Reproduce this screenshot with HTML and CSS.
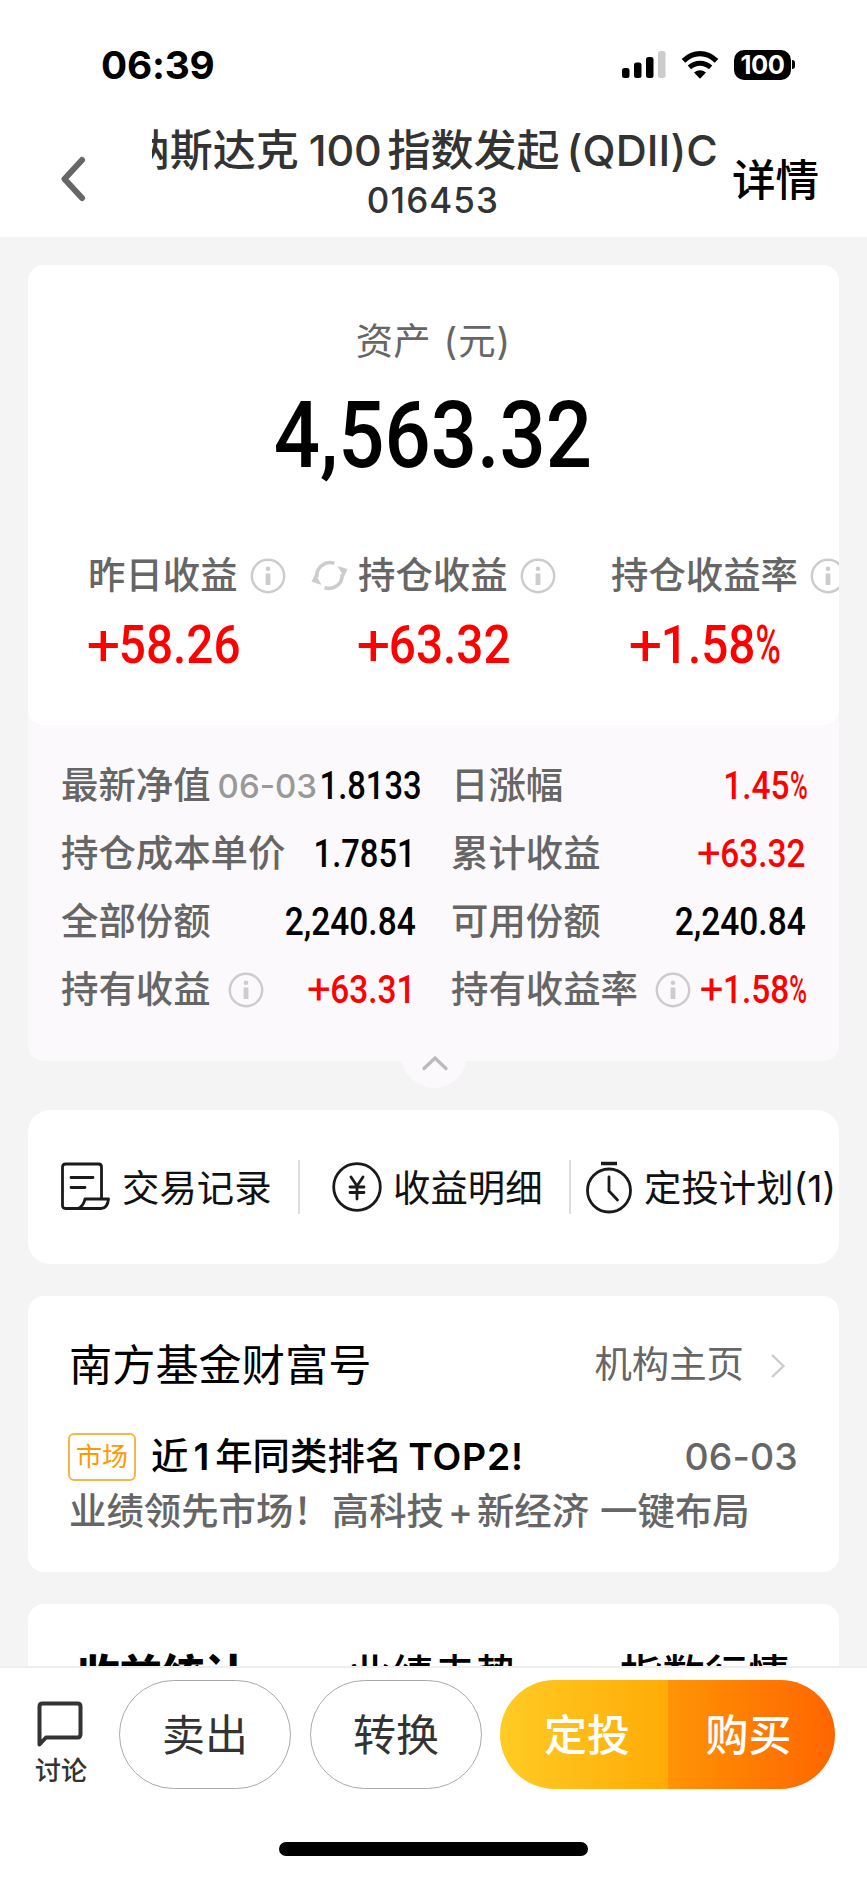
FILE: index.html
```html
<!DOCTYPE html>
<html lang="zh-CN">
<head>
<meta charset="utf-8">
<title>基金持仓</title>
<link rel="stylesheet" href="styles.css">
</head>
<body>
<svg class="defs" width="0" height="0">
  <symbol id="info" viewBox="0 0 36 36">
    <circle cx="18" cy="18" r="16.2" fill="none" stroke="#ccc" stroke-width="2.4"/>
    <circle cx="18" cy="10.8" r="2.3" fill="#ccc"/>
    <path d="M15.600 15.500h4.800v11.500h-4.800z" fill="#ccc"/>
  </symbol>
</svg>
<div class="screen">
  <header class="header">
    <div class="status">
      <span class="time">06:39</span>
      <div class="indicators">
        <svg width="44" height="28" viewBox="0 0 44 28">
          <rect x="0" y="17" width="7.500" height="10" rx="2.5"/>
          <rect x="12" y="11.500" width="7.500" height="15.500" rx="2.500"/>
          <rect x="24" y="6" width="7.500" height="21" rx="2.500"/>
          <rect x="36" y="0" width="7.500" height="27" rx="2.500" fill="#ccc"/>
        </svg>
        <svg class="wifi" width="38" height="28" viewBox="0 0 38 28">
          <path d="M2.500 9.800Q10 2.600 19 2.600T35.500 9.800" fill="none" stroke="#000" stroke-width="5.200"/>
          <path d="M8.400 16.400Q13 12.200 19 12.200T29.600 16.400" fill="none" stroke="#000" stroke-width="5"/>
          <path d="M13 21.600Q19 17 25 21.600L19 27.800Z"/>
        </svg>
        <div class="battery"><span>100</span></div>
        <i class="nub"></i>
      </div>
    </div>
    <div class="nav">
      <svg class="back" width="28" height="48" viewBox="0 0 28 48"><path d="M23 5L5.500 24L23 43" fill="none" stroke="#666" stroke-width="6" stroke-linecap="round" stroke-linejoin="round"/></svg>
      <div class="heading">
        <div class="marquee"><span class="fund">纳斯达克<b class="hund">100</b>指数发起<b class="cls">(QDII)C</b></span></div>
        <div class="code">016453</div>
      </div>
      <span class="detail">详情</span>
    </div>
  </header>

  <main class="content">
    <section class="asset">
      <div class="summary">
        <div class="asset-label">资产<span class="unit">(元)</span></div>
        <div class="total"><span class="num">4,563.32</span></div>
        <div class="stats">
          <div class="stat">
            <div class="stat-label">昨日收益<svg class="info"><use href="#info"/></svg></div>
            <span class="num big"><b class="sign">+</b>58.26</span>
          </div>
          <div class="stat second">
            <div class="stat-label"><svg class="refresh" viewBox="0 0 38 32"><g fill="none" stroke="#ccc" stroke-width="3.600"><path d="M23.500 3.400A13 13 0 0 0 6 17"/><path d="M13.500 27.600A13 13 0 0 0 31 14"/></g><path d="M.500 21.500L10.500 25L4.500 13.500ZM36.500 9L26.500 6L33 17Z" fill="#ccc"/></svg>持仓收益<svg class="info"><use href="#info"/></svg></div>
            <span class="num big"><b class="sign">+</b>63.32</span>
          </div>
          <div class="stat third">
            <div class="stat-label">持仓收益率<svg class="info"><use href="#info"/></svg></div>
            <span class="num big"><b class="sign">+</b>1.58<b class="pct">%</b></span>
          </div>
        </div>
      </div>
      <div class="details">
        <div class="row"><span>最新净值</span><span class="date">06-03</span><span class="val over"><span class="num">1.8133</span></span></div>
        <div class="row"><span>日涨幅</span><span class="val red"><span class="num">1.45<b class="pct">%</b></span></span></div>
        <div class="row"><span>持仓成本单价</span><span class="val unit-price"><span class="num">1.7851</span></span></div>
        <div class="row"><span>累计收益</span><span class="val red"><span class="num"><b class="sign">+</b>63.32</span></span></div>
        <div class="row"><span>全部份额</span><span class="val"><span class="num">2,240.84</span></span></div>
        <div class="row"><span>可用份额</span><span class="val"><span class="num">2,240.84</span></span></div>
        <div class="row"><span>持有收益</span><svg class="info wide"><use href="#info"/></svg><span class="val red"><span class="num"><b class="sign">+</b>63.31</span></span></div>
        <div class="row"><span>持有收益率</span><svg class="info wide"><use href="#info"/></svg><span class="val red"><span class="num"><b class="sign">+</b>1.58<b class="pct">%</b></span></span></div>
      </div>
      <div class="collapse"><svg width="28" height="16" viewBox="0 0 28 16"><path d="M3 13.500L14 3L25 13.500" fill="none" stroke="#bbb" stroke-width="3.400" stroke-linecap="round"/></svg></div>
    </section>

    <section class="actions">
      <div class="action a1">
        <svg width="50" height="52" viewBox="0 0 50 52" fill="none" stroke="#1a1a1a" stroke-width="2.800" stroke-linejoin="round" stroke-linecap="round"><path d="M20 47.500H5.500Q2.500 47.500 2.500 44.500V6Q2.500 3 5.500 3H38.500Q41.500 3 41.500 6V37.500M11 16.500H33M11 26.500H25M25 38H48.500Q47.500 47.500 41 47.500H18Q23.500 45 25 38Z"/></svg>
        <span>交易记录</span>
      </div>
      <div class="action a2">
        <svg width="50" height="52" viewBox="0 0 50 52" fill="none" stroke="#1a1a1a" stroke-width="2.800" stroke-linecap="round"><circle cx="25" cy="26" r="23.300"/><path d="M19 16L25 25L31 16M18 26H32M18 31.500H32M25 25V38"/></svg>
        <span>收益明细</span>
      </div>
      <div class="action a3">
        <svg width="48" height="54" viewBox="0 0 48 54" fill="none" stroke="#1a1a1a" stroke-width="2.800" stroke-linecap="round"><circle cx="24" cy="30.500" r="21.500"/><path d="M24 17V31L32.500 40"/><path d="M16 3.500H32" stroke-width="3.400" stroke-linecap="butt"/></svg>
        <span>定投计划(1)</span>
      </div>
    </section>

    <section class="news">
      <div class="news-head">
        <span class="org">南方基金财富号</span>
        <span class="home">机构主页</span>
        <svg width="18" height="28" viewBox="0 0 18 28"><path d="M3 3L14.500 14L3 25" fill="none" stroke="#ccc" stroke-width="2.400"/></svg>
      </div>
      <div class="post">
        <span class="tag">市场</span>
        <span class="post-title">近<b class="one">1</b>年同类排名<b class="top">TOP2!</b></span>
        <span class="post-date">06-03</span>
      </div>
      <div class="post-sub">业绩领先市场！<span class="hi">高科技</span><b class="plus">+</b>新经济<span class="one-key">一键布局</span></div>
    </section>

    <section class="tabs">
      <span class="tab on">收益统计</span>
      <span class="tab">业绩走势</span>
      <span class="tab">指数行情</span>
    </section>
  </main>

  <footer class="footer">
    <div class="bar">
      <div class="discuss">
        <svg width="48" height="50" viewBox="0 0 48 50"><path d="M3.500 44.500V6.500Q3.500 3.500 6.500 3.500H41.500Q44.500 3.500 44.500 6.500V34Q44.500 37.500 41.500 37.500H10Z" fill="none" stroke="#333" stroke-width="4" stroke-linejoin="round"/></svg>
        <span>讨论</span>
      </div>
      <div class="pill">卖出</div>
      <div class="pill">转换</div>
      <div class="buy"><span class="auto">定投</span><span class="now">购买</span></div>
    </div>
    <div class="indicator"></div>
  </footer>
</div>
</body>
</html>
```

FILE: styles.css
```css
* { box-sizing: border-box; }
body { margin: 0; background: #f4f4f4; }
b { font-weight: inherit; }
svg { display: block; flex: none; }
.defs { position: absolute; }
.screen {
  width: 867px; height: 1877px; overflow: hidden;
  display: flex; flex-direction: column;
  font-family: Inter, "Noto Sans CJK SC", sans-serif;
  font-size: 37.4px; line-height: 48px; color: #000; white-space: nowrap;
}

/* Header */
.header { height: 237px; flex: none; background: #fff; }
.status { height: 120px; padding: 42px 72px 0 101px; display: flex; justify-content: space-between; align-items: flex-start; }
.time { font-size: 38.8px; font-weight: 700; line-height: 46px; letter-spacing: -0.2px; }
.indicators { display: flex; align-items: center; height: 45px; }
.wifi { margin-left: 15px; }
.battery {
  margin-left: 15px; width: 57px; height: 30px; border-radius: 10px; background: #000; color: #fff;
  font-size: 25.5px; font-weight: 700; line-height: 30px; text-align: center; letter-spacing: -0.5px;
}
.nub { width: 3px; height: 9px; margin-left: 1px; border-radius: 0 4px 4px 0; background: #000; }
.nav { display: flex; height: 117px; padding-left: 59px; }
.back { margin-top: 35px; }
.heading { width: 566px; margin-left: 65px; color: #333; }
.marquee { height: 58px; overflow: hidden; display: flex; justify-content: flex-end; padding-top: 2px; }
.fund { font-size: 43px; font-weight: 500; line-height: 56px; }
.hund { margin: 0 6px 0 10px; letter-spacing: -0.2px; }
.cls { margin-left: 7px; letter-spacing: 0.1px; }
.code { margin: -1px 0 0 -4px; font-size: 35px; font-weight: 500; line-height: 46px; letter-spacing: 1.1px; text-align: center; }
.detail { margin: 33px 0 0 14px; font-size: 43.6px; font-weight: 500; line-height: 56px; }

/* Asset card */
.content { flex: 1; min-height: 0; padding: 28px 28px 0; overflow: hidden; }
.asset { position: relative; height: 796px; border-radius: 16px; background: #fbf9fb; }
.summary { height: 460px; overflow: hidden; border-radius: 16px; background: #fff; }
.asset-label { padding-top: 53px; text-align: center; color: #666; }
.unit { margin-left: 13px; letter-spacing: 1px; }
.num { font-family: Roboto, sans-serif; font-weight: 500; display: inline-block; transform: scaleX(0.88); }
.sign { display: inline-block; margin: 0 0.05em 0 0.03em; font-weight: 400; transform: scale(1.25, 1.1); }
.pct { display: inline-block; margin: 0 -0.14em 0 -0.1em; transform: scaleX(0.72); }
.total { margin: 17px 2px 0 0; text-align: center; font-size: 92.5px; line-height: 100px; }
.stats { display: flex; margin-top: 66px; color: #666; font-weight: 500; }
.stat { width: 270px; flex: none; padding-left: 60px; }
.stat-label { display: flex; align-items: center; height: 48px; }
.info { width: 36px; height: 36px; margin-left: 12px; }
.refresh { width: 38px; height: 32px; margin: 0 9px 0 -47px; }
.third { padding-left: 43px; }
.big { margin-top: 17px; font-size: 53px; line-height: 56px; color: #f00; transform: scaleX(0.9); transform-origin: left; }
.third .big { margin-left: 19px; }
.details {
  height: 335px; padding: 27px 33px 0; display: grid; grid-template-columns: 355px 355px;
  column-gap: 35px; grid-auto-rows: 68px; color: #666; font-weight: 500;
}
.row { display: flex; align-items: center; }
.val { display: flex; flex: 1 1 0; min-width: 0; justify-content: flex-end; font-size: 38px; color: #000; }
.val .num { transform-origin: right; }
.val.red { color: #f00; }
.val.over { margin-right: -6px; }
.val.over .num, .val.unit-price .num { transform: scaleX(0.86); }
.date { margin-left: 7px; font-size: 33px; letter-spacing: 0; color: #999; }
.info.wide { margin-left: 17px; }
.collapse {
  position: absolute; left: 373px; top: 757px; width: 66px; height: 66px; border-radius: 50%;
  background: #fbf9fb; padding: 33px 0 0 20px;
}

/* Shortcuts */
.actions { display: flex; align-items: center; height: 154px; margin-top: 49px; border-radius: 22px; background: #fff; color: #111; overflow: hidden; }
.action { display: flex; align-items: center; height: 54px; flex: none; }
.a1 { width: 272px; padding-left: 32px; border-right: 2px solid #ddd; }
.a2 { width: 271px; padding-left: 32px; border-right: 2px solid #ddd; }
.a3 { padding-left: 14px; }
.action span { margin: 3px 0 0 12px; }
.a2 span { margin-left: 11px; }
.a3 span { margin-left: 11px; }

/* Institution card */
.news { height: 276px; margin-top: 32px; padding: 41px 41px 0 41px; border-radius: 16px; background: #fff; }
.news-head { display: flex; align-items: center; height: 56px; }
.org { font-size: 43.2px; }
.home { margin: 0 25px 0 auto; color: #666; }
.news-head svg { margin-right: 11px; margin-top: 2px; }
.post { display: flex; align-items: center; height: 48px; margin-top: 40px; font-weight: 500; }
.tag { width: 68px; height: 48px; margin-left: -1px; border: 2px solid #f5b64c; border-radius: 6px; color: #f90; font-size: 26px; line-height: 44px; text-align: center; font-weight: 400; }
.post-title { margin-left: 15px; font-weight: 500; }
.one { margin: 0 6px 0 5px; font-weight: 600; }
.top { margin-left: 6px; font-weight: 600; letter-spacing: 0.8px; }
.post-date { margin-left: auto; color: #666; letter-spacing: 0.2px; }
.post-sub { margin-top: 7px; color: #666; font-weight: 500; }
.hi { margin-left: 1px; }
.plus { margin: 0 4px; }
.one-key { margin-left: 11px; }

/* Chart tabs */
.tabs { display: flex; justify-content: space-between; height: 160px; margin-top: 32px; padding: 43px 49px 0; border-radius: 16px; background: #fff; font-size: 42.5px; line-height: 56px; font-weight: 500; }
.tab.on { font-weight: 900; }

/* Bottom bar */
.footer { height: 211px; flex: none; background: #fff; border-top: 2px solid #eee; }
.bar { display: flex; height: 174px; padding: 12px 0 0 35px; }
.discuss { width: 52px; padding: 20px 0 0 1px; font-size: 26px; line-height: 34px; color: #333; }
.discuss span { display: block; margin-top: 4px; margin-left: -1px; font-weight: 500; }
.pill { width: 172px; height: 109px; margin-left: 32px; border: 1.500px solid #aaa; border-radius: 55px; font-size: 43px; line-height: 109px; text-align: center; color: #333; }
.pill + .pill { margin-left: 19px; }
.buy { display: flex; width: 335px; height: 109px; margin-left: 18px; border-radius: 55px; overflow: hidden; color: #fff; font-size: 43px; line-height: 111px; font-weight: 500; }
.buy span { width: 50%; }
.auto { padding-left: 44px; background: linear-gradient(90deg, #ffcb25, #ffab05); }
.now { padding-left: 38px; background: linear-gradient(90deg, #ff9405, #ff6500); }
.indicator { width: 309px; height: 14px; margin: 0 auto; border-radius: 7px; background: #000; }
```
